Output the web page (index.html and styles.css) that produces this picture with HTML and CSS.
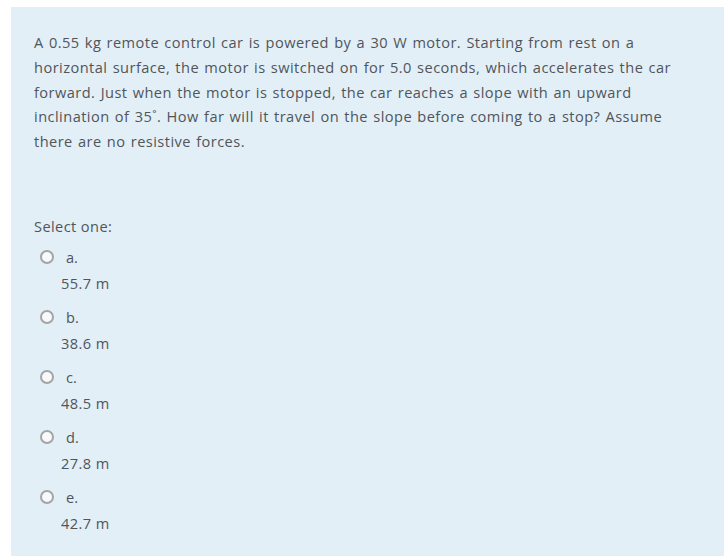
FILE: index.html
```html
<!DOCTYPE html>
<html>
<head>
<meta charset="utf-8">
<link rel="stylesheet" href="styles.css">
</head>
<body>
<div class="que">
  <div class="qtext">A 0.55 kg remote control car is powered by a 30 W motor. Starting from rest on a horizontal surface, the motor is switched on for 5.0 seconds, which accelerates the car forward. Just when the motor is stopped, the car reaches a slope with an upward inclination of 35˚. How far will it travel on the slope before coming to a stop? Assume there are no resistive forces.</div>
  <div class="prompt">Select one:</div>
  <div class="answers">
    <div class="opt"><div class="row"><span class="radio"></span><span class="letter">a.</span></div><div class="val">55.7 m</div></div>
    <div class="opt"><div class="row"><span class="radio"></span><span class="letter">b.</span></div><div class="val">38.6 m</div></div>
    <div class="opt"><div class="row"><span class="radio"></span><span class="letter">c.</span></div><div class="val">48.5 m</div></div>
    <div class="opt"><div class="row"><span class="radio"></span><span class="letter">d.</span></div><div class="val">27.8 m</div></div>
    <div class="opt"><div class="row"><span class="radio"></span><span class="letter">e.</span></div><div class="val">42.7 m</div></div>
  </div>
</div>
</body>
</html>
```
FILE: styles.css
```css
html, body { margin: 0; padding: 0; background: #fff; overflow: hidden; }
body { padding: 7px 0 0 11px; font-family: "Open Sans", "Noto Sans", sans-serif; color: #50555a; font-size: 14.6px; height: 549px; }
.que { background: #e3eff7; padding: 23px 20px 0 23px; height: 100%; }
.qtext { line-height: 24.8px; width: 648px; letter-spacing: 0.45px; word-spacing: 1px; }
.prompt { margin-top: 62px; line-height: 20px; letter-spacing: 0.4px; }
.answers { margin-top: 11px; }
.opt { height: 60px; }
.row { display: flex; align-items: center; height: 20px; }
.radio { width: 10px; height: 10px; border: 2px solid #a3a5a7; border-radius: 50%; background: #f7f9fa; margin-left: 6px; }
.letter { margin-left: 12px; }
.val { margin-left: 27px; margin-top: 6px; line-height: 20px; letter-spacing: 0.4px; }
```
